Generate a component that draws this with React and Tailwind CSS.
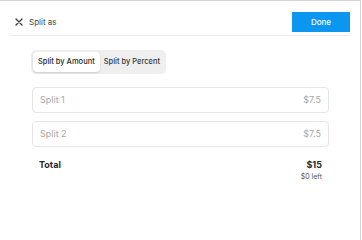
function App() {
  const splits = [
    { label: "Split 1", amount: "$7.5" },
    { label: "Split 2", amount: "$7.5" },
  ];

  return (
    <div className="h-[240px] w-[361px] border-t border-r border-[#d4d4d4] bg-white font-['Inter',sans-serif] text-[#2f2f2f]">
      <header className="mx-[10px] flex items-center justify-between border-b border-[#ececec] pt-[11px] pb-[3px]">
        <div className="flex items-center gap-[6px] pl-[5px]">
          <svg width="8" height="8" viewBox="0 0 8 8" fill="none" stroke="#3a3a3a" strokeWidth="1.3" strokeLinecap="round">
            <path d="M1 1l6 6M7 1l-6 6" />
          </svg>
          <span className="text-[8px] text-[#444]">Split as</span>
        </div>
        <button className="h-[20px] w-[58px] bg-[#0b96f0] text-[8px] font-medium text-white">Done</button>
      </header>

      <main className="px-[31px]">
        <div className="mt-[14px] inline-flex items-center rounded-[5px] bg-[#efefef] p-[2px]">
          <button className="h-[20px] rounded-[4px] bg-white px-[5px] text-[7.5px] font-medium text-[#2a2a2a] shadow-[0_1px_2px_rgba(0,0,0,0.15)]">
            Split by Amount
          </button>
          <button className="h-[20px] px-[4px] text-[7.5px] font-medium text-[#3a3a3a]">Split by Percent</button>
        </div>

        <div className="mt-[13px] ml-[1px] flex flex-col gap-[8px]">
          {splits.map((split) => (
            <div
              key={split.label}
              className="flex h-[26px] items-center justify-between rounded-[4px] border border-[#e6e6e6] px-[7px] text-[9px] text-[#a8a8a8]"
            >
              <span>{split.label}</span>
              <span>{split.amount}</span>
            </div>
          ))}
        </div>

        <div className="mt-[11px] ml-[1px] flex justify-between px-[7px]">
          <span className="text-[9px] font-bold text-[#2a2a2a]">Total</span>
          <div className="flex flex-col items-end">
            <span className="text-[9px] font-bold text-[#2a2a2a]">$15</span>
            <span className="text-[7px] text-[#555]">$0 left</span>
          </div>
        </div>
      </main>
    </div>
  );
}

export default App;
